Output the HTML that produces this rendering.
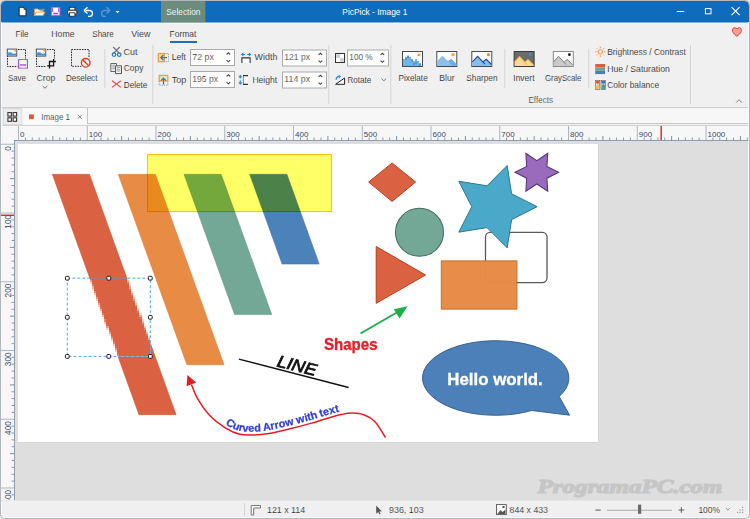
<!DOCTYPE html>
<html><head><meta charset="utf-8">
<style>
html,body{margin:0;padding:0;width:750px;height:519px;overflow:hidden;background:#eef0f2;}
svg{position:absolute;left:0;top:0;display:block;}
text{font-family:"Liberation Sans", sans-serif;}
</style></head>
<body>
<svg width="750" height="519" viewBox="0 0 750 519">

<!-- window frame -->
<rect x="0" y="0" width="750" height="519" fill="#eef0f2"/>
<rect x="0.5" y="0.5" width="749" height="518" rx="5" fill="#f0f0f0" stroke="#a9b0b8" stroke-width="1"/>
<path d="M1,6 Q1,1 6,1 L744,1 Q749,1 749,6 L749,22.8 L1,22.8 Z" fill="#0f6cbd"/>
<!-- contextual tab -->
<rect x="161" y="1" width="44.4" height="21.8" fill="#6b8b7d"/>
<!-- ribbon -->
<rect x="1" y="22.8" width="748" height="84.2" fill="#f0f0f0"/>
<rect x="1" y="22.8" width="748" height="1" fill="#f8f8f8"/>
<rect x="1" y="107" width="748" height="1" fill="#cdcdcd"/>
<!-- tab bar -->
<rect x="1" y="108" width="748" height="18" fill="#f0f0f0"/>
<rect x="3.5" y="108.5" width="18.5" height="16" fill="#ececec" stroke="#d9d9d9" stroke-width="1"/>
<rect x="22.5" y="108" width="65" height="17" fill="#f9f9f9"/>
<rect x="87" y="108" width="1" height="16" fill="#c4c4c4"/>
<rect x="88" y="108" width="661" height="16" fill="#f7f7f7"/>
<rect x="88" y="123" width="661" height="1" fill="#c8c8c8"/>
<rect x="1" y="125" width="748" height="1" fill="#d2d2d2"/>
<!-- rulers -->
<rect x="1" y="126" width="748" height="15" fill="#f7f7f7"/>
<rect x="1" y="141" width="14" height="359" fill="#f7f7f7"/>
<!-- canvas area -->
<rect x="15" y="141" width="734" height="359" fill="#dedede"/>
<rect x="18" y="144" width="581" height="299" fill="#d6d6d6"/>
<rect x="18" y="144" width="580" height="298" fill="#ffffff"/>
<!-- status bar -->
<rect x="1" y="500" width="748" height="1" fill="#e6e6e6"/>
<rect x="1" y="501" width="748" height="17" fill="#f0f0f0"/>


<!-- QAT icons -->
<g>
 <path d="M19.2,7.3 H24 L26,9.3 V15.8 H19.2 Z" fill="#ffffff" stroke="#1a1a1a" stroke-width="0.9"/>
 <path d="M24,7.3 V9.3 H26" fill="#777" stroke="#1a1a1a" stroke-width="0.7"/>
 <path d="M34.5,9 H38 L39,10 H43 V15.5 H34.5 Z" fill="#fff" stroke="#f09a3e" stroke-width="1"/>
 <path d="M34.5,15.5 L36.5,12 H45 L43,15.5 Z" fill="#fff" stroke="#f09a3e" stroke-width="1"/>
 <path d="M40.5,10.5 Q42,9 44,9.5" fill="none" stroke="#31a5e6" stroke-width="1.1"/>
 <path d="M43.2,8.3 L45.3,9.3 L43.6,10.8 Z" fill="#31a5e6"/>
 <rect x="51.4" y="7.4" width="8.5" height="8.2" fill="#f6e6f6" stroke="#c35bd0" stroke-width="0.9"/>
 <rect x="53" y="7.8" width="5.3" height="3.6" fill="#ffffff"/>
 <path d="M52.6,7.6 V12 M58.7,7.6 V12" stroke="#a945c0" stroke-width="0.9"/>
 <rect x="53.2" y="12.9" width="5" height="1.3" fill="#a945c0"/>
 <rect x="69.5" y="7.3" width="5.4" height="3" fill="#fff" stroke="#222" stroke-width="0.8"/>
 <rect x="67.6" y="10.2" width="9.2" height="4" rx="0.8" fill="#f4f0ea" stroke="#222" stroke-width="0.9"/>
 <rect x="69.5" y="12.8" width="5.4" height="3.4" fill="#fff" stroke="#222" stroke-width="0.8"/>
 <path d="M85.5,10.5 H90 A3,3 0 0 1 90,16.4 H88" fill="none" stroke="#fff" stroke-width="1.3"/>
 <path d="M84,10.5 L87.5,7.3 M84,10.5 L87.5,13.5" fill="none" stroke="#fff" stroke-width="1.3"/>
 <path d="M108.5,10.5 H104 A3,3 0 0 0 104,16.4 H106" fill="none" stroke="#5e97d3" stroke-width="1.3"/>
 <path d="M110,10.5 L106.5,7.3 M110,10.5 L106.5,13.5" fill="none" stroke="#5e97d3" stroke-width="1.3"/>
 <path d="M115.6,11 H119.6 L117.6,13.2 Z" fill="#fff"/>
</g>
<!-- window controls -->
<rect x="676.8" y="11" width="7.4" height="1" fill="#fff"/>
<rect x="705.4" y="8.6" width="5.6" height="5.2" fill="none" stroke="#fff" stroke-width="1"/>
<path d="M731.6,7.2 L739.6,15.2 M739.6,7.2 L731.6,15.2" stroke="#fff" stroke-width="1.15"/>

<text x="166.3" y="15" font-size="9.6" fill="#eef3f0" textLength="34.2" lengthAdjust="spacingAndGlyphs" >Selection</text>
<text x="342.3" y="14.8" font-size="9.6" fill="#ffffff" textLength="65.2" lengthAdjust="spacingAndGlyphs" >PicPick - Image 1</text>
<text stroke="#f0f0f0" stroke-width="0.08" x="15.6" y="36.9" font-size="9.6" fill="#303030" textLength="13.0" lengthAdjust="spacingAndGlyphs" >File</text>
<text stroke="#f0f0f0" stroke-width="0.08" x="51.3" y="36.9" font-size="9.6" fill="#303030" textLength="23.2" lengthAdjust="spacingAndGlyphs" >Home</text>
<text stroke="#f0f0f0" stroke-width="0.08" x="92.3" y="36.9" font-size="9.6" fill="#303030" textLength="21.4" lengthAdjust="spacingAndGlyphs" >Share</text>
<text stroke="#f0f0f0" stroke-width="0.08" x="131.3" y="36.9" font-size="9.6" fill="#303030" textLength="19.1" lengthAdjust="spacingAndGlyphs" >View</text>
<text stroke="#f0f0f0" stroke-width="0.08" x="169.6" y="36.9" font-size="9.6" fill="#303030" textLength="26.8" lengthAdjust="spacingAndGlyphs" >Format</text>
<rect x="170" y="41" width="27" height="2" fill="#1a6fc0"/>

<rect x="104.3" y="49" width="1" height="39" fill="#d4d4d4"/>
<rect x="152.3" y="45" width="1" height="59" fill="#d4d4d4"/>
<rect x="328.3" y="45.5" width="1" height="58.5" fill="#d4d4d4"/>
<rect x="390.3" y="45" width="1" height="59" fill="#d4d4d4"/>
<rect x="504.3" y="49" width="1" height="39" fill="#d4d4d4"/>
<rect x="588.3" y="49" width="1" height="39" fill="#d4d4d4"/>
<rect x="690" y="45.5" width="1" height="58.5" fill="#d4d4d4"/>

<rect x="7.5" y="49.5" width="18.0" height="17.0" fill="none" stroke="#2a2a2a" stroke-width="1" stroke-dasharray="1.6,1"/>
<rect x="17.6" y="58.6" width="10.5" height="9.5" fill="#f0f0f0"/>
<g>
 <rect x="7.3" y="49.1" width="9.4" height="7" fill="#ffffff" stroke="#555" stroke-width="1"/>
 <path d="M7.8,55.6 L7.8,53.1 Q9.8,50.6 11.8,52.9 Q13.8,54.6 16.3,53.1 L16.3,55.6 Z" fill="#3d8fdc"/>
 <path d="M7.8,53.6 Q9.8,51.1 11.8,53.1" fill="none" stroke="#9fd0f5" stroke-width="0.7"/>
 <rect x="14.399999999999999" y="49.6" width="1.9" height="2" fill="#f5a540"/>
</g>
<g>
 <rect x="18.5" y="59.6" width="9" height="8.5" fill="#f2e0f4" stroke="#b052c8" stroke-width="1"/>
 <rect x="20.2" y="60.1" width="5.4" height="3.9" fill="#ffffff"/>
 <rect x="19.8" y="64.3" width="6.4" height="1.2" fill="#a848c0"/>
 <rect x="20.8" y="66" width="4.6" height="1.7" fill="#f6eef8"/>
</g>
<text stroke="#f0f0f0" stroke-width="0.08" x="8.0" y="80.6" font-size="9.6" fill="#303030" textLength="17.8" lengthAdjust="spacingAndGlyphs" >Save</text>
<rect x="36.5" y="49.5" width="18.0" height="17.0" fill="none" stroke="#2a2a2a" stroke-width="1" stroke-dasharray="1.6,1"/>
<rect x="46" y="58.5" width="11" height="10.5" fill="#f0f0f0"/>
<g>
 <rect x="36.3" y="49.1" width="9.4" height="7" fill="#ffffff" stroke="#555" stroke-width="1"/>
 <path d="M36.8,55.6 L36.8,53.1 Q38.8,50.6 40.8,52.9 Q42.8,54.6 45.3,53.1 L45.3,55.6 Z" fill="#3d8fdc"/>
 <path d="M36.8,53.6 Q38.8,51.1 40.8,53.1" fill="none" stroke="#9fd0f5" stroke-width="0.7"/>
 <rect x="43.4" y="49.6" width="1.9" height="2" fill="#f5a540"/>
</g>
<path d="M49.5,68.6 V61.5 H55.9 M53.6,59.1 V65.9 H47.2" fill="none" stroke="#111" stroke-width="1.3"/>
<text stroke="#f0f0f0" stroke-width="0.08" x="36.6" y="80.6" font-size="9.6" fill="#303030" textLength="18.6" lengthAdjust="spacingAndGlyphs" >Crop</text>
<path d="M42.6,86 L45,88.2 L47.4,86" fill="none" stroke="#666" stroke-width="0.9"/>
<rect x="71.5" y="49.5" width="17.5" height="16.799999999999997" fill="none" stroke="#2a2a2a" stroke-width="1" stroke-dasharray="1.6,1"/>
<circle cx="85.7" cy="62.8" r="5.6" fill="#f0f0f0"/>
<circle cx="85.7" cy="62.8" r="4.3" fill="none" stroke="#d9441c" stroke-width="1.4"/>
<path d="M82.7,59.8 L88.7,65.8" stroke="#d9441c" stroke-width="1.4"/>
<text stroke="#f0f0f0" stroke-width="0.08" x="66.0" y="80.6" font-size="9.6" fill="#303030" textLength="31.4" lengthAdjust="spacingAndGlyphs" >Deselect</text>
<g>
 <path d="M113.2,47 L119.5,53.3 M119.8,47 L113.5,53.3" stroke="#6e6e6e" stroke-width="1.2"/>
 <circle cx="114" cy="54.6" r="1.8" fill="none" stroke="#1f78c8" stroke-width="1.2"/>
 <circle cx="119.2" cy="54.6" r="1.8" fill="none" stroke="#1f78c8" stroke-width="1.2"/>
</g>
<text stroke="#f0f0f0" stroke-width="0.08" x="123.5" y="54.8" font-size="9.6" fill="#303030" textLength="13.9" lengthAdjust="spacingAndGlyphs" >Cut</text>
<g>
 <path d="M110.8,63.5 H116.5 V71.5 H110.8 Z" fill="#f4f4f4" stroke="#666" stroke-width="1"/>
 <path d="M111.8,65.3 H115 M111.8,67 H115 M111.8,68.7 H115" stroke="#888" stroke-width="0.7"/>
 <path d="M115.5,65.8 H121.5 V73.6 H115.5 Z" fill="#f8f8f8" stroke="#555" stroke-width="1"/>
 <path d="M116.7,67.6 H120.3 M116.7,69.3 H120.3 M116.7,71 H120.3" stroke="#777" stroke-width="0.7"/>
</g>
<text stroke="#f0f0f0" stroke-width="0.08" x="123.8" y="71.2" font-size="9.6" fill="#303030" textLength="19.6" lengthAdjust="spacingAndGlyphs" >Copy</text>
<path d="M112,80.8 L120.8,87.4 M120.8,80.8 L112,87.4" stroke="#e8414b" stroke-width="1.1"/>
<text stroke="#f0f0f0" stroke-width="0.08" x="123.8" y="87.8" font-size="9.6" fill="#303030" textLength="23.6" lengthAdjust="spacingAndGlyphs" >Delete</text>
<g>
 <rect x="158.3" y="53.5" width="6" height="8.2" fill="#fbe3a6" stroke="#f39a3c" stroke-width="1.2"/>
 <path d="M164.5,53.5 H168.5 V61.7 H164.5" fill="none" stroke="#888" stroke-width="0.8" stroke-dasharray="1.2,1"/>
 <path d="M161,57.6 H167 M163.4,55 L160.8,57.6 L163.4,60.2" fill="none" stroke="#1f80d0" stroke-width="1.3"/>
</g>
<text stroke="#f0f0f0" stroke-width="0.08" x="171.8" y="60.4" font-size="9.6" fill="#303030" textLength="14.2" lengthAdjust="spacingAndGlyphs" >Left</text>
<g>
 <rect x="159.2" y="75.4" width="8.6" height="5.5" fill="#fbe3a6" stroke="#f39a3c" stroke-width="1.2"/>
 <path d="M159.2,81 V85.2 H167.8 V81" fill="none" stroke="#888" stroke-width="0.8" stroke-dasharray="1.2,1"/>
 <path d="M163.5,78.2 V84.5 M161,80.6 L163.5,78.1 L166,80.6" fill="none" stroke="#1f80d0" stroke-width="1.3"/>
</g>
<text stroke="#f0f0f0" stroke-width="0.08" x="171.8" y="83.0" font-size="9.6" fill="#303030" textLength="14.6" lengthAdjust="spacingAndGlyphs" >Top</text>
<g>
 <path d="M242.5,54.5 H245 M247.2,54.5 H249.7" stroke="#1f86d6" stroke-width="1.2"/>
 <path d="M240.8,54.5 L243.4,52.5 V56.5 Z M251.4,54.5 L248.8,52.5 V56.5 Z" fill="#1f86d6"/>
 <path d="M241.9,63 V57.9 H250.1 V63" fill="#fafafa" stroke="#333" stroke-width="1.1"/>
</g>
<text stroke="#f0f0f0" stroke-width="0.08" x="254.6" y="60.4" font-size="9.6" fill="#303030" textLength="22.8" lengthAdjust="spacingAndGlyphs" >Width</text>
<g>
 <path d="M240.3,76.6 V78.6 M240.3,80.4 V83.2" stroke="#1f86d6" stroke-width="1.2"/>
 <path d="M240.3,74.8 L238.3,77.3 H242.3 Z M240.3,85 L238.3,82.5 H242.3 Z" fill="#1f86d6"/>
 <rect x="243.4" y="75.6" width="4.5" height="8.8" fill="#fafafa"/>
 <path d="M243.4,75.6 V84.4" stroke="#8a8a8a" stroke-width="1"/>
 <path d="M243,75.6 H248 M243,84.4 H248" stroke="#333" stroke-width="1.1"/>
</g>
<text stroke="#f0f0f0" stroke-width="0.08" x="252.4" y="83.0" font-size="9.6" fill="#303030" textLength="24.8" lengthAdjust="spacingAndGlyphs" >Height</text>
<rect x="190.5" y="49.5" width="44" height="16" fill="#ffffff" stroke="#a9a9a9" stroke-width="1"/><text stroke="#ffffff" stroke-width="0.14" x="192.3" y="59.6" font-size="9.6" fill="#3a3a3a" textLength="21.6" lengthAdjust="spacingAndGlyphs" >72 px</text><path d="M226.6,54.4 L228.4,52.8 L230.20000000000002,54.4 M226.6,60.2 L228.4,61.8 L230.20000000000002,60.2" fill="none" stroke="#444" stroke-width="1.1"/>
<rect x="190.5" y="71.5" width="44" height="16" fill="#ffffff" stroke="#a9a9a9" stroke-width="1"/><text stroke="#ffffff" stroke-width="0.14" x="192.3" y="81.6" font-size="9.6" fill="#3a3a3a" textLength="25.8" lengthAdjust="spacingAndGlyphs" >195 px</text><path d="M226.6,76.4 L228.4,74.8 L230.20000000000002,76.4 M226.6,82.2 L228.4,83.8 L230.20000000000002,82.2" fill="none" stroke="#444" stroke-width="1.1"/>
<rect x="282.5" y="50.0" width="44" height="16.0" fill="#ffffff" stroke="#a9a9a9" stroke-width="1"/><text stroke="#ffffff" stroke-width="0.14" x="284.3" y="60.1" font-size="9.6" fill="#3a3a3a" textLength="25.8" lengthAdjust="spacingAndGlyphs" >121 px</text><path d="M318.59999999999997,54.9 L320.4,53.3 L322.2,54.9 M318.59999999999997,60.7 L320.4,62.3 L322.2,60.7" fill="none" stroke="#444" stroke-width="1.1"/>
<rect x="282.5" y="72.0" width="44" height="16.0" fill="#ffffff" stroke="#a9a9a9" stroke-width="1"/><text stroke="#ffffff" stroke-width="0.14" x="284.3" y="82.1" font-size="9.6" fill="#3a3a3a" textLength="25.8" lengthAdjust="spacingAndGlyphs" >114 px</text><path d="M318.59999999999997,76.9 L320.4,75.3 L322.2,76.9 M318.59999999999997,82.7 L320.4,84.3 L322.2,82.7" fill="none" stroke="#444" stroke-width="1.1"/>
<rect x="347.5" y="50.0" width="41" height="16.0" fill="#ffffff" stroke="#a9a9a9" stroke-width="1"/><text stroke="#ffffff" stroke-width="0.14" x="349.3" y="60.1" font-size="9.6" fill="#3a3a3a" textLength="23.4" lengthAdjust="spacingAndGlyphs" >100 %</text><path d="M380.59999999999997,54.9 L382.4,53.3 L384.2,54.9 M380.59999999999997,60.7 L382.4,62.3 L384.2,60.7" fill="none" stroke="#444" stroke-width="1.1"/>
<g>
 <rect x="335.5" y="53.5" width="9" height="9" fill="#fff" stroke="#333" stroke-width="1"/>
 <rect x="336.2" y="54.2" width="3.8" height="3.8" fill="#cfcfcf"/>
 <rect x="340" y="58" width="3.8" height="3.8" fill="#cfcfcf"/>
</g>
<g>
 <path d="M335.6,84.3 L344.6,78 V84.3 Z" fill="#fff" stroke="#222" stroke-width="1"/>
 <path d="M336,79.6 Q336.5,76.2 339.8,76.4" fill="none" stroke="#2d8ad8" stroke-width="1.2"/>
 <path d="M338.6,75.2 L340.6,76.4 L338.8,78" fill="none" stroke="#2d8ad8" stroke-width="1"/>
</g>
<text stroke="#f0f0f0" stroke-width="0.08" x="347.5" y="83.2" font-size="9.6" fill="#303030" textLength="23.6" lengthAdjust="spacingAndGlyphs" >Rotate</text>
<path d="M381.4,78.6 L383.8,80.8 L386.2,78.6" fill="none" stroke="#666" stroke-width="0.9"/>
<rect x="402.5" y="51.5" width="20" height="15" fill="#fdfdfd" stroke="#4a4a4a" stroke-width="1"/>
<g fill="#74b3e6">
 <path d="M403,66 V59 H405 V57 H407 V55.5 H409 V57 H411 V59 H413 V61 H415 V59 H417 V61 H419 V63 H421 V66 Z"/>
</g>
<g fill="#4d97d8"><rect x="407" y="56" width="2" height="2"/><rect x="405" y="58" width="2" height="2"/><rect x="411" y="60" width="2" height="2"/><rect x="415" y="62" width="2" height="2"/><rect x="413" y="63" width="2" height="2"/><rect x="419" y="64" width="2" height="2"/></g>
<rect x="417.6" y="53.6" width="2.6" height="2.4" fill="#f59a3a"/>
<text stroke="#f0f0f0" stroke-width="0.08" x="398.5" y="80.6" font-size="9.6" fill="#303030" textLength="29.2" lengthAdjust="spacingAndGlyphs" >Pixelate</text>
<rect x="436.8" y="51.5" width="20" height="15" fill="#fdfdfd" stroke="#4a4a4a" stroke-width="1"/>
<path d="M437.3,66 V61 L442.2,55.8 L448.5,61.5 L451.3,59 L456.3,64 V66 Z" fill="#8cc0ea"/>
<path d="M448,61 L451.3,59 L456.3,64 L456.3,66 L452.5,66 Z" fill="#6daee6"/>
<circle cx="453" cy="54.8" r="1.7" fill="#f9a246"/>
<text stroke="#f0f0f0" stroke-width="0.08" x="439.3" y="80.6" font-size="9.6" fill="#303030" textLength="15.2" lengthAdjust="spacingAndGlyphs" >Blur</text>
<rect x="471.8" y="51.5" width="20" height="15" fill="#fdfdfd" stroke="#4a4a4a" stroke-width="1"/>
<path d="M472.3,66 V61.5 L477.6,56 L483,61.5 L486.3,59 L491.3,64.5 V66 Z" fill="#88bde9"/>
<path d="M472.3,62 L477.6,56.3 L485,64.2 M483,61.8 L486.3,59.3 L491.5,64.5" fill="none" stroke="#1e4c98" stroke-width="1.1"/>
<circle cx="488.4" cy="54.7" r="1.6" fill="#f58a1e"/>
<text stroke="#f0f0f0" stroke-width="0.08" x="466.3" y="80.6" font-size="9.6" fill="#303030" textLength="31.2" lengthAdjust="spacingAndGlyphs" >Sharpen</text>
<rect x="514.1" y="51.5" width="20" height="15" fill="#6b6b6b" stroke="#3a3a3a" stroke-width="1"/>
<path d="M514.6,66 V61.5 L519.5,56 L525.2,62 L528,59.2 L533.5,64.5 V66 Z" fill="#f9d98f"/>
<path d="M514.6,61.8 L519.5,56.3 L526.8,64.5 M525,61.8 L528,59.4 L533.5,64.8" fill="none" stroke="#f2a04a" stroke-width="0.9"/>
<circle cx="530.2" cy="54.6" r="1.6" fill="#2e90e0"/>
<text stroke="#f0f0f0" stroke-width="0.08" x="513.3" y="80.6" font-size="9.6" fill="#303030" textLength="21.2" lengthAdjust="spacingAndGlyphs" >Invert</text>
<rect x="553.3" y="51.5" width="20" height="15" fill="#fbfbfb" stroke="#8a8a8a" stroke-width="1"/>
<path d="M553.8,66 V61.5 L558.5,56 L564.5,62 L567.5,59.2 L572.5,64.5 V66 Z" fill="#c9c9c9"/>
<path d="M553.8,61.8 L558.5,56.3 L566,64.5 M564.3,61.8 L567.5,59.4 L572.5,64.8" fill="none" stroke="#7a7a7a" stroke-width="0.9"/>
<rect x="568.1" y="53.3" width="2.6" height="2.6" rx="0.8" fill="#1a1a1a"/>
<text stroke="#f0f0f0" stroke-width="0.08" x="545.0" y="80.6" font-size="9.6" fill="#303030" textLength="36.4" lengthAdjust="spacingAndGlyphs" >GrayScale</text>
<text stroke="#f0f0f0" stroke-width="0.08" x="528.5" y="102.5" font-size="9.6" fill="#505050" textLength="24.4" lengthAdjust="spacingAndGlyphs" >Effects</text>
<g stroke="#f28c34" stroke-width="0.9" fill="none">
 <circle cx="600.3" cy="51.8" r="2.2"/>
 <path d="M600.3,46.7 V48.2 M600.3,55.4 V56.9 M595.2,51.8 H596.7 M603.9,51.8 H605.4 M596.7,48.2 L597.7,49.2 M603.9,48.2 L602.9,49.2 M596.7,55.4 L597.7,54.4 M603.9,55.4 L602.9,54.4"/>
</g>
<text stroke="#f0f0f0" stroke-width="0.08" x="607.2" y="55.1" font-size="9.6" fill="#303030" textLength="78.6" lengthAdjust="spacingAndGlyphs" >Brightness / Contrast</text>
<rect x="595.2" y="64" width="9.8" height="3.4" fill="#df5f3c"/>
<rect x="595.2" y="67.4" width="9.8" height="3.4" fill="#6aa88b"/>
<rect x="595.2" y="70.8" width="9.8" height="3.3" fill="#4a7cc2"/>
<text stroke="#f0f0f0" stroke-width="0.08" x="607.2" y="71.7" font-size="9.6" fill="#303030" textLength="62.6" lengthAdjust="spacingAndGlyphs" >Hue / Saturation</text>
<rect x="595.4" y="80.6" width="4.3" height="8.8" fill="#fff" stroke="#7a4a3a" stroke-width="0.6"/>
<path d="M595.8,89 V86 L597.5,83.5 L599.4,85 V89 Z" fill="#f2c060"/><rect x="595.8" y="81" width="3.6" height="2.6" fill="#e05a3a"/>
<rect x="601" y="80.6" width="4.3" height="8.8" fill="#fff" stroke="#3a4a7a" stroke-width="0.6"/>
<path d="M601.4,89 V86 L603.1,83.5 L605,85 V89 Z" fill="#5aa080"/><rect x="601.4" y="81" width="3.6" height="2.6" fill="#3c70c0"/>
<text stroke="#f0f0f0" stroke-width="0.08" x="607.2" y="87.8" font-size="9.6" fill="#303030" textLength="52.0" lengthAdjust="spacingAndGlyphs" >Color balance</text>
<path d="M736.9,36.3 C733.5,33.6 732.4,32 732.4,30.2 C732.4,28.7 733.5,27.7 734.7,27.7 C735.7,27.7 736.4,28.3 736.9,29.1 C737.4,28.3 738.1,27.7 739.1,27.7 C740.3,27.7 741.4,28.7 741.4,30.2 C741.4,32 740.3,33.6 736.9,36.3 Z" fill="#f5a394" stroke="#e8393b" stroke-width="1"/>
<path d="M736.2,102.6 L739,99.6 L741.8,102.6" fill="none" stroke="#777" stroke-width="0.9"/>
<g>
 <rect x="7.9" y="112.6" width="3.5" height="3.5" fill="#fff" stroke="#333" stroke-width="1.1"/>
 <rect x="13.1" y="112.6" width="3.5" height="3.5" fill="#fff" stroke="#333" stroke-width="1.1"/>
 <rect x="7.9" y="117.8" width="3.5" height="3.5" fill="#fff" stroke="#333" stroke-width="1.1"/>
 <rect x="13.1" y="117.8" width="3.5" height="3.5" fill="#fff" stroke="#333" stroke-width="1.1"/>
 <rect x="29" y="114.4" width="4.8" height="4.8" fill="#de5a34"/>
 <path d="M77.8,114.8 L81.8,118.8 M81.8,114.8 L77.8,118.8" stroke="#777" stroke-width="0.9"/>
</g>
<text stroke="#f9f9f9" stroke-width="0.12" x="41.3" y="120" font-size="9.6" fill="#3e3e3e" textLength="28.6" lengthAdjust="spacingAndGlyphs" >Image 1</text>
<defs><clipPath id="rclip"><rect x="0" y="126" width="750" height="374"/></clipPath></defs><g clip-path="url(#rclip)"><rect x="18.00" y="126" width="1" height="14" fill="#a9b6c6"/>
<text x="20.00" y="137" font-size="8.0" fill="#3a4a6a">0</text>
<rect x="24.88" y="137.5" width="1" height="2.5" fill="#8a99ae"/>
<rect x="31.75" y="137.5" width="1" height="2.5" fill="#8a99ae"/>
<rect x="38.62" y="137.5" width="1" height="2.5" fill="#8a99ae"/>
<rect x="45.50" y="137.5" width="1" height="2.5" fill="#8a99ae"/>
<rect x="52.38" y="136" width="1" height="4" fill="#7d8da4"/>
<rect x="59.25" y="137.5" width="1" height="2.5" fill="#8a99ae"/>
<rect x="66.12" y="137.5" width="1" height="2.5" fill="#8a99ae"/>
<rect x="73.00" y="137.5" width="1" height="2.5" fill="#8a99ae"/>
<rect x="79.88" y="137.5" width="1" height="2.5" fill="#8a99ae"/>
<rect x="86.75" y="126" width="1" height="14" fill="#a9b6c6"/>
<text x="88.75" y="137" font-size="8.0" fill="#3a4a6a">100</text>
<rect x="93.62" y="137.5" width="1" height="2.5" fill="#8a99ae"/>
<rect x="100.50" y="137.5" width="1" height="2.5" fill="#8a99ae"/>
<rect x="107.38" y="137.5" width="1" height="2.5" fill="#8a99ae"/>
<rect x="114.25" y="137.5" width="1" height="2.5" fill="#8a99ae"/>
<rect x="121.12" y="136" width="1" height="4" fill="#7d8da4"/>
<rect x="128.00" y="137.5" width="1" height="2.5" fill="#8a99ae"/>
<rect x="134.88" y="137.5" width="1" height="2.5" fill="#8a99ae"/>
<rect x="141.75" y="137.5" width="1" height="2.5" fill="#8a99ae"/>
<rect x="148.62" y="137.5" width="1" height="2.5" fill="#8a99ae"/>
<rect x="155.50" y="126" width="1" height="14" fill="#a9b6c6"/>
<text x="157.50" y="137" font-size="8.0" fill="#3a4a6a">200</text>
<rect x="162.38" y="137.5" width="1" height="2.5" fill="#8a99ae"/>
<rect x="169.25" y="137.5" width="1" height="2.5" fill="#8a99ae"/>
<rect x="176.12" y="137.5" width="1" height="2.5" fill="#8a99ae"/>
<rect x="183.00" y="137.5" width="1" height="2.5" fill="#8a99ae"/>
<rect x="189.88" y="136" width="1" height="4" fill="#7d8da4"/>
<rect x="196.75" y="137.5" width="1" height="2.5" fill="#8a99ae"/>
<rect x="203.62" y="137.5" width="1" height="2.5" fill="#8a99ae"/>
<rect x="210.50" y="137.5" width="1" height="2.5" fill="#8a99ae"/>
<rect x="217.38" y="137.5" width="1" height="2.5" fill="#8a99ae"/>
<rect x="224.25" y="126" width="1" height="14" fill="#a9b6c6"/>
<text x="226.25" y="137" font-size="8.0" fill="#3a4a6a">300</text>
<rect x="231.12" y="137.5" width="1" height="2.5" fill="#8a99ae"/>
<rect x="238.00" y="137.5" width="1" height="2.5" fill="#8a99ae"/>
<rect x="244.88" y="137.5" width="1" height="2.5" fill="#8a99ae"/>
<rect x="251.75" y="137.5" width="1" height="2.5" fill="#8a99ae"/>
<rect x="258.62" y="136" width="1" height="4" fill="#7d8da4"/>
<rect x="265.50" y="137.5" width="1" height="2.5" fill="#8a99ae"/>
<rect x="272.38" y="137.5" width="1" height="2.5" fill="#8a99ae"/>
<rect x="279.25" y="137.5" width="1" height="2.5" fill="#8a99ae"/>
<rect x="286.12" y="137.5" width="1" height="2.5" fill="#8a99ae"/>
<rect x="293.00" y="126" width="1" height="14" fill="#a9b6c6"/>
<text x="295.00" y="137" font-size="8.0" fill="#3a4a6a">400</text>
<rect x="299.88" y="137.5" width="1" height="2.5" fill="#8a99ae"/>
<rect x="306.75" y="137.5" width="1" height="2.5" fill="#8a99ae"/>
<rect x="313.62" y="137.5" width="1" height="2.5" fill="#8a99ae"/>
<rect x="320.50" y="137.5" width="1" height="2.5" fill="#8a99ae"/>
<rect x="327.38" y="136" width="1" height="4" fill="#7d8da4"/>
<rect x="334.25" y="137.5" width="1" height="2.5" fill="#8a99ae"/>
<rect x="341.12" y="137.5" width="1" height="2.5" fill="#8a99ae"/>
<rect x="348.00" y="137.5" width="1" height="2.5" fill="#8a99ae"/>
<rect x="354.88" y="137.5" width="1" height="2.5" fill="#8a99ae"/>
<rect x="361.75" y="126" width="1" height="14" fill="#a9b6c6"/>
<text x="363.75" y="137" font-size="8.0" fill="#3a4a6a">500</text>
<rect x="368.62" y="137.5" width="1" height="2.5" fill="#8a99ae"/>
<rect x="375.50" y="137.5" width="1" height="2.5" fill="#8a99ae"/>
<rect x="382.38" y="137.5" width="1" height="2.5" fill="#8a99ae"/>
<rect x="389.25" y="137.5" width="1" height="2.5" fill="#8a99ae"/>
<rect x="396.12" y="136" width="1" height="4" fill="#7d8da4"/>
<rect x="403.00" y="137.5" width="1" height="2.5" fill="#8a99ae"/>
<rect x="409.88" y="137.5" width="1" height="2.5" fill="#8a99ae"/>
<rect x="416.75" y="137.5" width="1" height="2.5" fill="#8a99ae"/>
<rect x="423.62" y="137.5" width="1" height="2.5" fill="#8a99ae"/>
<rect x="430.50" y="126" width="1" height="14" fill="#a9b6c6"/>
<text x="432.50" y="137" font-size="8.0" fill="#3a4a6a">600</text>
<rect x="437.38" y="137.5" width="1" height="2.5" fill="#8a99ae"/>
<rect x="444.25" y="137.5" width="1" height="2.5" fill="#8a99ae"/>
<rect x="451.12" y="137.5" width="1" height="2.5" fill="#8a99ae"/>
<rect x="458.00" y="137.5" width="1" height="2.5" fill="#8a99ae"/>
<rect x="464.88" y="136" width="1" height="4" fill="#7d8da4"/>
<rect x="471.75" y="137.5" width="1" height="2.5" fill="#8a99ae"/>
<rect x="478.62" y="137.5" width="1" height="2.5" fill="#8a99ae"/>
<rect x="485.50" y="137.5" width="1" height="2.5" fill="#8a99ae"/>
<rect x="492.38" y="137.5" width="1" height="2.5" fill="#8a99ae"/>
<rect x="499.25" y="126" width="1" height="14" fill="#a9b6c6"/>
<text x="501.25" y="137" font-size="8.0" fill="#3a4a6a">700</text>
<rect x="506.12" y="137.5" width="1" height="2.5" fill="#8a99ae"/>
<rect x="513.00" y="137.5" width="1" height="2.5" fill="#8a99ae"/>
<rect x="519.88" y="137.5" width="1" height="2.5" fill="#8a99ae"/>
<rect x="526.75" y="137.5" width="1" height="2.5" fill="#8a99ae"/>
<rect x="533.62" y="136" width="1" height="4" fill="#7d8da4"/>
<rect x="540.50" y="137.5" width="1" height="2.5" fill="#8a99ae"/>
<rect x="547.38" y="137.5" width="1" height="2.5" fill="#8a99ae"/>
<rect x="554.25" y="137.5" width="1" height="2.5" fill="#8a99ae"/>
<rect x="561.12" y="137.5" width="1" height="2.5" fill="#8a99ae"/>
<rect x="568.00" y="126" width="1" height="14" fill="#a9b6c6"/>
<text x="570.00" y="137" font-size="8.0" fill="#3a4a6a">800</text>
<rect x="574.88" y="137.5" width="1" height="2.5" fill="#8a99ae"/>
<rect x="581.75" y="137.5" width="1" height="2.5" fill="#8a99ae"/>
<rect x="588.62" y="137.5" width="1" height="2.5" fill="#8a99ae"/>
<rect x="595.50" y="137.5" width="1" height="2.5" fill="#8a99ae"/>
<rect x="602.38" y="136" width="1" height="4" fill="#7d8da4"/>
<rect x="609.25" y="137.5" width="1" height="2.5" fill="#8a99ae"/>
<rect x="616.12" y="137.5" width="1" height="2.5" fill="#8a99ae"/>
<rect x="623.00" y="137.5" width="1" height="2.5" fill="#8a99ae"/>
<rect x="629.88" y="137.5" width="1" height="2.5" fill="#8a99ae"/>
<rect x="636.75" y="126" width="1" height="14" fill="#a9b6c6"/>
<text x="638.75" y="137" font-size="8.0" fill="#3a4a6a">900</text>
<rect x="643.62" y="137.5" width="1" height="2.5" fill="#8a99ae"/>
<rect x="650.50" y="137.5" width="1" height="2.5" fill="#8a99ae"/>
<rect x="657.38" y="137.5" width="1" height="2.5" fill="#8a99ae"/>
<rect x="664.25" y="137.5" width="1" height="2.5" fill="#8a99ae"/>
<rect x="671.12" y="136" width="1" height="4" fill="#7d8da4"/>
<rect x="678.00" y="137.5" width="1" height="2.5" fill="#8a99ae"/>
<rect x="684.88" y="137.5" width="1" height="2.5" fill="#8a99ae"/>
<rect x="691.75" y="137.5" width="1" height="2.5" fill="#8a99ae"/>
<rect x="698.62" y="137.5" width="1" height="2.5" fill="#8a99ae"/>
<rect x="705.50" y="126" width="1" height="14" fill="#a9b6c6"/>
<text x="707.50" y="137" font-size="8.0" fill="#3a4a6a">1000</text>
<rect x="712.38" y="137.5" width="1" height="2.5" fill="#8a99ae"/>
<rect x="719.25" y="137.5" width="1" height="2.5" fill="#8a99ae"/>
<rect x="726.12" y="137.5" width="1" height="2.5" fill="#8a99ae"/>
<rect x="733.00" y="137.5" width="1" height="2.5" fill="#8a99ae"/>
<rect x="739.88" y="136" width="1" height="4" fill="#7d8da4"/>
<rect x="746.75" y="137.5" width="1" height="2.5" fill="#8a99ae"/>
<rect x="14" y="140" width="735" height="1" fill="#8d9db2"/>
<rect x="1" y="143.75" width="13" height="1" fill="#a9b6c6"/>
<text transform="translate(10.5,146.25) rotate(-90)" text-anchor="end" font-size="8.2" fill="#3a4a6a">0</text>
<rect x="11.5" y="150.62" width="2.5" height="1" fill="#8a99ae"/>
<rect x="11.5" y="157.50" width="2.5" height="1" fill="#8a99ae"/>
<rect x="11.5" y="164.38" width="2.5" height="1" fill="#8a99ae"/>
<rect x="11.5" y="171.25" width="2.5" height="1" fill="#8a99ae"/>
<rect x="10" y="178.12" width="4" height="1" fill="#7d8da4"/>
<rect x="11.5" y="185.00" width="2.5" height="1" fill="#8a99ae"/>
<rect x="11.5" y="191.88" width="2.5" height="1" fill="#8a99ae"/>
<rect x="11.5" y="198.75" width="2.5" height="1" fill="#8a99ae"/>
<rect x="11.5" y="205.62" width="2.5" height="1" fill="#8a99ae"/>
<rect x="1" y="212.50" width="13" height="1" fill="#a9b6c6"/>
<text transform="translate(10.5,215.00) rotate(-90)" text-anchor="end" font-size="8.2" fill="#3a4a6a">100</text>
<rect x="11.5" y="219.38" width="2.5" height="1" fill="#8a99ae"/>
<rect x="11.5" y="226.25" width="2.5" height="1" fill="#8a99ae"/>
<rect x="11.5" y="233.12" width="2.5" height="1" fill="#8a99ae"/>
<rect x="11.5" y="240.00" width="2.5" height="1" fill="#8a99ae"/>
<rect x="10" y="246.88" width="4" height="1" fill="#7d8da4"/>
<rect x="11.5" y="253.75" width="2.5" height="1" fill="#8a99ae"/>
<rect x="11.5" y="260.62" width="2.5" height="1" fill="#8a99ae"/>
<rect x="11.5" y="267.50" width="2.5" height="1" fill="#8a99ae"/>
<rect x="11.5" y="274.38" width="2.5" height="1" fill="#8a99ae"/>
<rect x="1" y="281.25" width="13" height="1" fill="#a9b6c6"/>
<text transform="translate(10.5,283.75) rotate(-90)" text-anchor="end" font-size="8.2" fill="#3a4a6a">200</text>
<rect x="11.5" y="288.12" width="2.5" height="1" fill="#8a99ae"/>
<rect x="11.5" y="295.00" width="2.5" height="1" fill="#8a99ae"/>
<rect x="11.5" y="301.88" width="2.5" height="1" fill="#8a99ae"/>
<rect x="11.5" y="308.75" width="2.5" height="1" fill="#8a99ae"/>
<rect x="10" y="315.62" width="4" height="1" fill="#7d8da4"/>
<rect x="11.5" y="322.50" width="2.5" height="1" fill="#8a99ae"/>
<rect x="11.5" y="329.38" width="2.5" height="1" fill="#8a99ae"/>
<rect x="11.5" y="336.25" width="2.5" height="1" fill="#8a99ae"/>
<rect x="11.5" y="343.12" width="2.5" height="1" fill="#8a99ae"/>
<rect x="1" y="350.00" width="13" height="1" fill="#a9b6c6"/>
<text transform="translate(10.5,352.50) rotate(-90)" text-anchor="end" font-size="8.2" fill="#3a4a6a">300</text>
<rect x="11.5" y="356.88" width="2.5" height="1" fill="#8a99ae"/>
<rect x="11.5" y="363.75" width="2.5" height="1" fill="#8a99ae"/>
<rect x="11.5" y="370.62" width="2.5" height="1" fill="#8a99ae"/>
<rect x="11.5" y="377.50" width="2.5" height="1" fill="#8a99ae"/>
<rect x="10" y="384.38" width="4" height="1" fill="#7d8da4"/>
<rect x="11.5" y="391.25" width="2.5" height="1" fill="#8a99ae"/>
<rect x="11.5" y="398.12" width="2.5" height="1" fill="#8a99ae"/>
<rect x="11.5" y="405.00" width="2.5" height="1" fill="#8a99ae"/>
<rect x="11.5" y="411.88" width="2.5" height="1" fill="#8a99ae"/>
<rect x="1" y="418.75" width="13" height="1" fill="#a9b6c6"/>
<text transform="translate(10.5,421.25) rotate(-90)" text-anchor="end" font-size="8.2" fill="#3a4a6a">400</text>
<rect x="11.5" y="425.62" width="2.5" height="1" fill="#8a99ae"/>
<rect x="11.5" y="432.50" width="2.5" height="1" fill="#8a99ae"/>
<rect x="11.5" y="439.38" width="2.5" height="1" fill="#8a99ae"/>
<rect x="11.5" y="446.25" width="2.5" height="1" fill="#8a99ae"/>
<rect x="10" y="453.12" width="4" height="1" fill="#7d8da4"/>
<rect x="11.5" y="460.00" width="2.5" height="1" fill="#8a99ae"/>
<rect x="11.5" y="466.88" width="2.5" height="1" fill="#8a99ae"/>
<rect x="11.5" y="473.75" width="2.5" height="1" fill="#8a99ae"/>
<rect x="11.5" y="480.62" width="2.5" height="1" fill="#8a99ae"/>
<rect x="1" y="487.50" width="13" height="1" fill="#a9b6c6"/>
<text transform="translate(10.5,490.00) rotate(-90)" text-anchor="end" font-size="8.2" fill="#3a4a6a">500</text>
<rect x="11.5" y="494.38" width="2.5" height="1" fill="#8a99ae"/>
<rect x="14" y="141" width="1" height="359" fill="#8d9db2"/>
<rect x="660.5" y="126" width="1.3" height="14" fill="#e81010"/>
<rect x="1" y="214.6" width="13" height="1.3" fill="#e81010"/></g>
<defs><clipPath id="cvclip"><rect x="18" y="144" width="580" height="298"/></clipPath></defs>
<g clip-path="url(#cvclip)">
<path d="M52.3,174.3 H89.50 L176.16,414.7 H138.96 Z" fill="#da6141" stroke="#c9502f" stroke-width="0.5"/>
<path d="M118.2,174.3 H155.40 L224.08,364.8 H186.88 Z" fill="#e88b45" stroke="#df7a30" stroke-width="0.5"/>
<path d="M184.0,174.3 H221.20 L271.78,314.6 H234.58 Z" fill="#74a896" stroke="#5f9580" stroke-width="0.5"/>
<path d="M249.7,174.3 H286.90 L319.27,264.1 H282.07 Z" fill="#4a82b9" stroke="#3c70a8" stroke-width="0.5"/>
<rect x="67.3" y="278.2" width="83" height="78.2" fill="#ffffff"/>
<g shape-rendering="crispEdges"><rect x="87.925" y="278.200" width="2.062" height="2.062" fill="#fefdfc"/><rect x="89.987" y="278.200" width="2.062" height="2.062" fill="#dd6d50"/><rect x="92.050" y="278.200" width="35.062" height="2.062" fill="#da6141"/><rect x="127.112" y="278.200" width="2.063" height="2.062" fill="#fbeeea"/><rect x="89.987" y="280.262" width="2.062" height="2.062" fill="#eaa694"/><rect x="92.050" y="280.262" width="35.062" height="2.062" fill="#da6141"/><rect x="127.112" y="280.262" width="2.063" height="2.062" fill="#eeb5a6"/><rect x="89.987" y="282.325" width="2.062" height="2.062" fill="#f7dcd5"/><rect x="92.050" y="282.325" width="35.062" height="2.062" fill="#da6141"/><rect x="127.112" y="282.325" width="2.063" height="2.062" fill="#e07c62"/><rect x="92.050" y="284.387" width="2.062" height="2.062" fill="#df775c"/><rect x="94.112" y="284.387" width="35.063" height="2.062" fill="#da6141"/><rect x="129.175" y="284.387" width="2.062" height="2.062" fill="#f8e1db"/><rect x="92.050" y="286.450" width="2.062" height="2.062" fill="#edb2a3"/><rect x="94.112" y="286.450" width="35.063" height="2.062" fill="#da6141"/><rect x="129.175" y="286.450" width="2.062" height="2.062" fill="#eba997"/><rect x="92.050" y="288.512" width="2.062" height="2.062" fill="#faebe7"/><rect x="94.112" y="288.512" width="35.063" height="2.062" fill="#da6141"/><rect x="129.175" y="288.512" width="2.062" height="2.062" fill="#de7256"/><rect x="131.238" y="288.512" width="2.062" height="2.062" fill="#fefdfc"/><rect x="94.112" y="290.575" width="2.062" height="2.062" fill="#e3866e"/><rect x="96.175" y="290.575" width="35.063" height="2.062" fill="#da6141"/><rect x="131.238" y="290.575" width="2.062" height="2.062" fill="#f5d5cd"/><rect x="94.112" y="292.637" width="2.062" height="2.062" fill="#f0bfb2"/><rect x="96.175" y="292.637" width="35.063" height="2.062" fill="#da6141"/><rect x="131.238" y="292.637" width="2.062" height="2.062" fill="#e89c88"/><rect x="94.112" y="294.700" width="2.062" height="2.062" fill="#fcf3f0"/><rect x="96.175" y="294.700" width="2.062" height="2.062" fill="#db6647"/><rect x="98.237" y="294.700" width="33.000" height="2.062" fill="#da6141"/><rect x="131.238" y="294.700" width="2.062" height="2.062" fill="#dc684a"/><rect x="133.300" y="294.700" width="2.062" height="2.062" fill="#fefaf9"/><rect x="96.175" y="296.762" width="2.062" height="2.062" fill="#e6927c"/><rect x="98.237" y="296.762" width="35.063" height="2.062" fill="#da6141"/><rect x="133.300" y="296.762" width="2.062" height="2.062" fill="#f2c6bb"/><rect x="96.175" y="298.825" width="2.062" height="2.062" fill="#f3cbc1"/><rect x="98.237" y="298.825" width="35.063" height="2.062" fill="#da6141"/><rect x="133.300" y="298.825" width="2.062" height="2.062" fill="#e59079"/><rect x="96.175" y="300.887" width="2.062" height="2.062" fill="#fefaf9"/><rect x="98.237" y="300.887" width="2.062" height="2.062" fill="#dc6b4d"/><rect x="100.300" y="300.887" width="33.000" height="2.062" fill="#da6141"/><rect x="133.300" y="300.887" width="2.062" height="2.062" fill="#db6344"/><rect x="135.363" y="300.887" width="2.062" height="2.062" fill="#fcf3f0"/><rect x="98.237" y="302.950" width="2.062" height="2.062" fill="#e89f8b"/><rect x="100.300" y="302.950" width="35.063" height="2.062" fill="#da6141"/><rect x="135.363" y="302.950" width="2.062" height="2.062" fill="#efbaac"/><rect x="98.237" y="305.012" width="2.062" height="2.062" fill="#f6d8d0"/><rect x="100.300" y="305.012" width="35.063" height="2.062" fill="#da6141"/><rect x="135.363" y="305.012" width="2.062" height="2.062" fill="#e28168"/><rect x="100.300" y="307.075" width="2.062" height="2.062" fill="#de7256"/><rect x="102.362" y="307.075" width="35.063" height="2.062" fill="#da6141"/><rect x="137.425" y="307.075" width="2.062" height="2.062" fill="#fae9e4"/><rect x="100.300" y="309.137" width="2.062" height="2.062" fill="#ecae9d"/><rect x="102.362" y="309.137" width="35.063" height="2.062" fill="#da6141"/><rect x="137.425" y="309.137" width="2.062" height="2.062" fill="#ecae9d"/><rect x="100.300" y="311.200" width="2.062" height="2.062" fill="#f9e6e1"/><rect x="102.362" y="311.200" width="35.063" height="2.062" fill="#da6141"/><rect x="137.425" y="311.200" width="2.062" height="2.062" fill="#df7559"/><rect x="102.362" y="313.262" width="2.062" height="2.062" fill="#e17f65"/><rect x="104.425" y="313.262" width="35.063" height="2.062" fill="#da6141"/><rect x="139.488" y="313.262" width="2.062" height="2.062" fill="#f6dad2"/><rect x="102.362" y="315.325" width="2.062" height="2.062" fill="#efbaac"/><rect x="104.425" y="315.325" width="35.063" height="2.062" fill="#da6141"/><rect x="139.488" y="315.325" width="2.062" height="2.062" fill="#e9a18e"/><rect x="102.362" y="317.387" width="2.062" height="2.062" fill="#fcf0ed"/><rect x="104.425" y="317.387" width="2.062" height="2.062" fill="#db6344"/><rect x="106.487" y="317.387" width="33.000" height="2.062" fill="#da6141"/><rect x="139.488" y="317.387" width="2.062" height="2.062" fill="#dd6d50"/><rect x="141.550" y="317.387" width="2.062" height="2.062" fill="#fefaf9"/><rect x="104.425" y="319.450" width="2.062" height="2.062" fill="#e48b73"/><rect x="106.487" y="319.450" width="35.063" height="2.062" fill="#da6141"/><rect x="141.550" y="319.450" width="2.062" height="2.062" fill="#f3cec4"/><rect x="104.425" y="321.512" width="2.062" height="2.062" fill="#f2c6bb"/><rect x="106.487" y="321.512" width="35.063" height="2.062" fill="#da6141"/><rect x="141.550" y="321.512" width="2.062" height="2.062" fill="#e6957f"/><rect x="104.425" y="323.575" width="2.062" height="2.062" fill="#fdf8f6"/><rect x="106.487" y="323.575" width="2.062" height="2.062" fill="#dc684a"/><rect x="108.550" y="323.575" width="33.000" height="2.062" fill="#da6141"/><rect x="141.550" y="323.575" width="2.062" height="2.062" fill="#db6647"/><rect x="143.613" y="323.575" width="2.062" height="2.062" fill="#fdf5f3"/><rect x="106.487" y="325.637" width="2.062" height="2.062" fill="#e79a85"/><rect x="108.550" y="325.637" width="35.063" height="2.062" fill="#da6141"/><rect x="143.613" y="325.637" width="2.062" height="2.062" fill="#f1c1b5"/><rect x="106.487" y="327.700" width="2.062" height="2.062" fill="#f5d3ca"/><rect x="108.550" y="327.700" width="35.063" height="2.062" fill="#da6141"/><rect x="143.613" y="327.700" width="2.062" height="2.062" fill="#e3866e"/><rect x="106.487" y="329.762" width="2.062" height="2.062" fill="#fefdfc"/><rect x="108.550" y="329.762" width="2.062" height="2.062" fill="#dd7053"/><rect x="110.612" y="329.762" width="35.063" height="2.062" fill="#da6141"/><rect x="145.675" y="329.762" width="2.062" height="2.062" fill="#fbeeea"/><rect x="108.550" y="331.825" width="2.062" height="2.062" fill="#eaa694"/><rect x="110.612" y="331.825" width="35.063" height="2.062" fill="#da6141"/><rect x="145.675" y="331.825" width="2.062" height="2.062" fill="#edb2a3"/><rect x="108.550" y="333.887" width="2.062" height="2.062" fill="#f8e1db"/><rect x="110.612" y="333.887" width="35.063" height="2.062" fill="#da6141"/><rect x="145.675" y="333.887" width="2.062" height="2.062" fill="#e07a5f"/><rect x="110.612" y="335.950" width="2.062" height="2.062" fill="#e07a5f"/><rect x="112.675" y="335.950" width="35.063" height="2.062" fill="#da6141"/><rect x="147.738" y="335.950" width="2.062" height="2.062" fill="#f8e1db"/><rect x="110.612" y="338.012" width="2.062" height="2.062" fill="#edb2a3"/><rect x="112.675" y="338.012" width="35.063" height="2.062" fill="#da6141"/><rect x="147.738" y="338.012" width="2.062" height="2.062" fill="#eaa694"/><rect x="110.612" y="340.075" width="2.062" height="2.062" fill="#fbeeea"/><rect x="112.675" y="340.075" width="35.063" height="2.062" fill="#da6141"/><rect x="147.738" y="340.075" width="2.062" height="2.062" fill="#dd7053"/><rect x="149.800" y="340.075" width="0.500" height="2.062" fill="#fdf5f3"/><rect x="112.675" y="342.137" width="2.062" height="2.062" fill="#e3866e"/><rect x="114.737" y="342.137" width="35.063" height="2.062" fill="#da6141"/><rect x="149.800" y="342.137" width="0.500" height="2.062" fill="#de7256"/><rect x="112.675" y="344.200" width="2.062" height="2.062" fill="#f1c1b5"/><rect x="114.737" y="344.200" width="35.563" height="2.062" fill="#da6141"/><rect x="112.675" y="346.262" width="2.062" height="2.062" fill="#fdf5f3"/><rect x="114.737" y="346.262" width="2.062" height="2.062" fill="#db6647"/><rect x="116.800" y="346.262" width="33.500" height="2.062" fill="#da6141"/><rect x="114.737" y="348.325" width="2.062" height="2.062" fill="#e6957f"/><rect x="116.800" y="348.325" width="33.500" height="2.062" fill="#da6141"/><rect x="114.737" y="350.387" width="2.062" height="2.062" fill="#f3cec4"/><rect x="116.800" y="350.387" width="33.500" height="2.062" fill="#da6141"/><rect x="114.737" y="352.450" width="2.062" height="2.062" fill="#fefaf9"/><rect x="116.800" y="352.450" width="2.062" height="2.062" fill="#dd6d50"/><rect x="118.862" y="352.450" width="31.438" height="2.062" fill="#da6141"/><rect x="116.800" y="354.512" width="2.062" height="1.887" fill="#e89f8b"/><rect x="118.862" y="354.512" width="31.438" height="1.887" fill="#da6141"/></g>
<rect x="147.6" y="154.6" width="183.8" height="57" fill="#ffff66" stroke="#f2c200" stroke-width="1" style="mix-blend-mode:multiply"/>
<path d="M368.6,182 L392.1,163 L415.6,182 L392.1,201.5 Z" fill="#da6141" stroke="#b8401c" stroke-width="1"/>
<circle cx="419.5" cy="232.3" r="24" fill="#74a896" stroke="#42705f" stroke-width="1.1"/>
<path d="M376.2,246.5 L425.6,275 L376.2,303.3 Z" fill="#da6141" stroke="#b8401c" stroke-width="1"/>
<rect x="485.5" y="232.3" width="61.5" height="50.3" rx="4.5" fill="none" stroke="#5a5a5a" stroke-width="1.3"/>
<path d="M537.10,206.70 L511.60,219.63 L507.18,247.88 L487.00,227.62 L458.77,232.15 L471.80,206.70 L458.77,181.25 L487.00,185.78 L507.18,165.52 L511.60,193.77 Z" fill="#4aa9c8" stroke="#2f7590" stroke-width="1"/>
<path d="M558.60,172.30 L546.93,178.15 L547.70,191.18 L536.80,184.00 L525.90,191.18 L526.67,178.15 L515.00,172.30 L526.67,166.45 L525.90,153.42 L536.80,160.60 L547.70,153.42 L546.93,166.45 Z" fill="#9a6bbd" stroke="#57387e" stroke-width="1.1"/>
<rect x="441.3" y="260.9" width="75.6" height="48.2" fill="#e88b45" fill-opacity="0.985" stroke="#c66f2b" stroke-width="1"/>
<path d="M360.5,333.5 L398.5,311.5" stroke="#1fae4b" stroke-width="2"/>
<path d="M407.5,306.3 L393.8,309.2 L399.6,318.6 Z" fill="#1fae4b"/>
<text x="324" y="350.2" style="font-weight:bold" font-size="15.8" fill="#e3202b" stroke="#e3202b" stroke-width="0.35" textLength="53.5" lengthAdjust="spacingAndGlyphs">Shapes</text>
<path d="M238.9,359.1 L348.6,387.5" stroke="#111" stroke-width="1.4"/>
<text transform="translate(276.3,366.2) rotate(14)" font-size="16.5" fill="#111" stroke="#111" stroke-width="0.8" style="font-style:italic" textLength="40" lengthAdjust="spacingAndGlyphs">LINE</text>
<path d="M559.22,396.54 A73.2,37.3 0 1 0 531.63,410.50 L569.6,415.2 Z" fill="#4c80b9" stroke="#30598a" stroke-width="0.9"/>
<text x="447.3" y="384.8" style="font-weight:bold" font-size="15.8" fill="#ffffff" stroke="#ffffff" stroke-width="0.3" textLength="95.5" lengthAdjust="spacingAndGlyphs">Hello world.</text>
<path d="M385.5,437.5 C383.75,434.88 378.52,425.55 375,421.8 C371.48,418.05 368.23,416.45 364.4,415 C360.57,413.55 355.85,413.17 352,413.1 C348.15,413.03 345.80,413.62 341.3,414.6 C336.80,415.58 330.10,417.53 325,419 C319.90,420.47 316.53,421.77 310.7,423.4 C304.87,425.03 296.95,427.12 290,428.8 C283.05,430.48 275.00,432.47 269,433.5 C263.00,434.53 259.00,434.92 254,435 C249.00,435.08 243.92,435.28 239,434 C234.08,432.72 229.38,430.40 224.5,427.3 C219.62,424.20 214.15,420.10 209.7,415.4 C205.25,410.70 200.85,404.25 197.8,399.1 C194.75,393.95 192.47,386.93 191.4,384.5" fill="none" stroke="#e51c24" stroke-width="1.5"/>
<path d="M187.4,375 L186.6,386.2 L196.2,382.4 Z" fill="#e51c24"/>
<defs><path id="tpath" d="M191.4,381.2 C192.47,383.63 194.75,390.65 197.8,395.8 C200.85,400.95 205.25,407.40 209.7,412.09999999999997 C214.15,416.80 219.62,420.90 224.5,424.0 C229.38,427.10 234.08,429.42 239,430.7 C243.92,431.98 249.00,431.78 254,431.7 C259.00,431.62 263.00,431.23 269,430.2 C275.00,429.17 283.05,427.18 290,425.5 C296.95,423.82 304.87,421.73 310.7,420.09999999999997 C316.53,418.47 319.90,417.17 325,415.7 C330.10,414.23 336.80,412.28 341.3,411.3 C345.80,410.32 348.15,409.73 352,409.8 C355.85,409.87 360.57,410.25 364.4,411.7 C368.23,413.15 371.48,414.75 375,418.5 C378.52,422.25 383.75,431.58 385.5,434.2"/></defs>
<text font-size="10.8" style="font-weight:bold" fill="#3140cf" stroke="#3140cf" stroke-width="0.25"><textPath href="#tpath" startOffset="56" textLength="118" lengthAdjust="spacingAndGlyphs">Curved Arrow with text</textPath></text>
<rect x="67.3" y="278.2" width="83" height="78.2" fill="none" stroke="#3d9ef0" stroke-width="0.9" stroke-dasharray="3,2"/>
<rect x="65.40" y="276.30" width="3.8" height="3.8" rx="1" fill="#fff" stroke="#1a1a1a" stroke-width="1"/>
<rect x="65.40" y="315.40" width="3.8" height="3.8" rx="1" fill="#fff" stroke="#1a1a1a" stroke-width="1"/>
<rect x="65.40" y="354.50" width="3.8" height="3.8" rx="1" fill="#fff" stroke="#1a1a1a" stroke-width="1"/>
<rect x="106.90" y="276.30" width="3.8" height="3.8" rx="1" fill="#fff" stroke="#1a1a1a" stroke-width="1"/>
<rect x="106.90" y="354.50" width="3.8" height="3.8" rx="1" fill="#fff" stroke="#1a1a1a" stroke-width="1"/>
<rect x="148.40" y="276.30" width="3.8" height="3.8" rx="1" fill="#fff" stroke="#1a1a1a" stroke-width="1"/>
<rect x="148.40" y="315.40" width="3.8" height="3.8" rx="1" fill="#fff" stroke="#1a1a1a" stroke-width="1"/>
<rect x="148.40" y="354.50" width="3.8" height="3.8" rx="1" fill="#fff" stroke="#1a1a1a" stroke-width="1"/>
</g>
<rect x="244" y="503" width="1" height="13" fill="#d6d6d6"/>
<g>
 <path d="M251.2,515 V505.5 H260.5 V508 H253.7 V515 Z" fill="#fff" stroke="#666" stroke-width="0.9"/>
 <path d="M376.2,505.6 V513.8 L378.2,512 L379.6,514.6 L380.6,514.1 L379.4,511.5 L381.8,511.3 Z" fill="#555"/>
 <rect x="496.5" y="504.6" width="9.8" height="10" fill="#fff" stroke="#555" stroke-width="0.9"/>
 <path d="M497.5,514 L500.5,510 L502.5,512 L505.5,509.5 V514 Z" fill="#555"/>
 <rect x="502.5" y="506" width="2" height="2" fill="#555"/>
 <rect x="595.3" y="509.5" width="5.4" height="1.1" fill="#666"/>
 <rect x="607" y="509.8" width="65" height="0.8" fill="#9a9a9a"/>
 <rect x="638" y="504.6" width="3.2" height="9.2" fill="#6a6a6a"/>
 <path d="M678.5,510 H684.2 M681.35,507.2 V512.8" stroke="#666" stroke-width="1.1"/>
 <path d="M726,508.2 L727.9,510 L729.8,508.2" fill="none" stroke="#777" stroke-width="0.8"/>
 <g fill="#9a9a9a"><rect x="742" y="506.8" width="1.2" height="1.2"/><rect x="739.5" y="509.3" width="1.2" height="1.2"/><rect x="742" y="509.3" width="1.2" height="1.2"/><rect x="737" y="511.8" width="1.2" height="1.2"/><rect x="739.5" y="511.8" width="1.2" height="1.2"/><rect x="742" y="511.8" width="1.2" height="1.2"/></g>
</g>
<text stroke="#f0f0f0" stroke-width="0.12" x="267" y="512.7" font-size="9.6" fill="#333333" textLength="38.2" lengthAdjust="spacingAndGlyphs" >121 x 114</text>
<text stroke="#f0f0f0" stroke-width="0.12" x="389" y="512.7" font-size="9.6" fill="#333333" textLength="34.6" lengthAdjust="spacingAndGlyphs" >936, 103</text>
<text stroke="#f0f0f0" stroke-width="0.12" x="509.6" y="512.7" font-size="9.6" fill="#333333" textLength="38.4" lengthAdjust="spacingAndGlyphs" >844 x 433</text>
<text stroke="#f0f0f0" stroke-width="0.12" x="698.4" y="512.7" font-size="9.6" fill="#333333" textLength="21.6" lengthAdjust="spacingAndGlyphs" >100%</text>
<text x="537.5" y="492.8" style="font-family:Liberation Serif;font-style:italic;font-weight:bold" font-size="18.5" fill="#c6c6c6" stroke="#c6c6c6" stroke-width="1.2" stroke-linejoin="round" textLength="185" lengthAdjust="spacingAndGlyphs">ProgramaPC.com</text>

<path fill-rule="evenodd" fill="#e9ecef" d="M0,0 H750 V519 H0 Z M4.5,0.5 H745.5 Q749.5,0.5 749.5,4.5 V514.5 Q749.5,518.5 745.5,518.5 H4.5 Q0.5,518.5 0.5,514.5 V4.5 Q0.5,0.5 4.5,0.5 Z"/>
<rect x="1" y="22" width="1" height="104" fill="#f9f9f9"/>
<rect x="748" y="22" width="1" height="495" fill="#f6f6f6"/>
<rect x="2" y="517" width="746" height="1" fill="#f9f9f9"/>
<rect x="1" y="501" width="1" height="16" fill="#f9f9f9"/>
<rect x="0.5" y="0.5" width="749" height="518" rx="4" fill="none" stroke="#b3b8be" stroke-width="1"/>

</svg>
</body></html>
